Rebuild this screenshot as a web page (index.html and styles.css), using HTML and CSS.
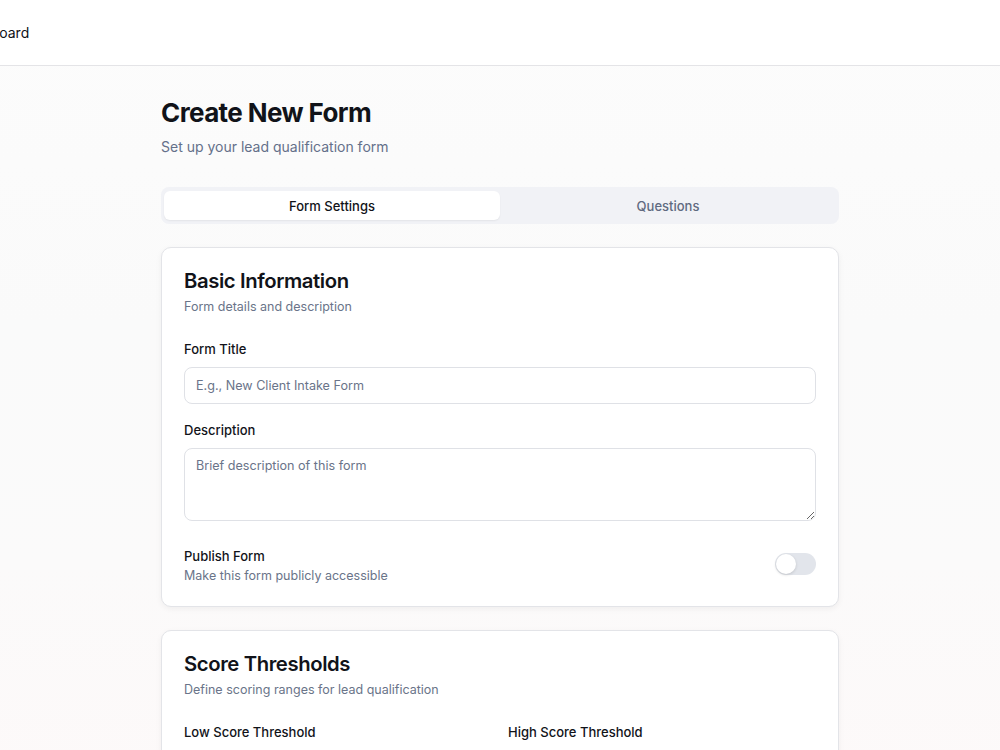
FILE: index.html
```html
<!DOCTYPE html>
<html lang="en">
<head>
<meta charset="utf-8">
<title>Create New Form</title>
<link rel="stylesheet" href="styles.css">
</head>
<body>
<header class="topbar">
  <a class="nav-link" href="#">Dashboard</a>
</header>
<main class="page">
  <div class="container">
    <h1 class="page-title">Create New Form</h1>
    <p class="page-sub">Set up your lead qualification form</p>

    <div class="tabs">
      <button class="tab active">Form Settings</button>
      <button class="tab">Questions</button>
    </div>

    <section class="card">
      <h2 class="card-title">Basic Information</h2>
      <p class="card-sub">Form details and description</p>

      <div class="field">
        <label class="label">Form Title</label>
        <input class="input" type="text" placeholder="E.g., New Client Intake Form">
      </div>

      <div class="field">
        <label class="label">Description</label>
        <textarea class="textarea" placeholder="Brief description of this form"></textarea>
      </div>

      <div class="switch-row">
        <div>
          <div class="label">Publish Form</div>
          <div class="hint">Make this form publicly accessible</div>
        </div>
        <span class="switch"><span class="knob"></span></span>
      </div>
    </section>

    <section class="card">
      <h2 class="card-title">Score Thresholds</h2>
      <p class="card-sub">Define scoring ranges for lead qualification</p>
      <div class="grid2">
        <div class="field">
          <label class="label">Low Score Threshold</label>
          <input class="input" type="number" value="30">
        </div>
        <div class="field">
          <label class="label">High Score Threshold</label>
          <input class="input" type="number" value="70">
        </div>
      </div>
    </section>
  </div>
</main>
</body>
</html>
```

FILE: styles.css
```css
* { box-sizing: border-box; }
html, body { margin: 0; padding: 0; }
body {
  font-family: Inter, "Noto Sans", sans-serif;
  color: #0f1117;
  background: linear-gradient(180deg, #fcfcfc 0%, #fafafa 40%, #fbfafa 70%, #fdf9f9 100%);
  min-height: 100vh;
  overflow: hidden;
}
.topbar {
  height: 66px;
  background: #ffffff;
  border-bottom: 1px solid #e4e4e7;
  display: flex;
  align-items: center;
  overflow: hidden;
}
.nav-link {
  margin-left: -43px;
  font-size: 14px;
  color: #0f1117;
  text-decoration: none;
  line-height: 20px;
}
.page { padding-top: 31px; }
.container {
  width: 678px;
  margin: 0 auto;
}
.page-title {
  margin: 0;
  font-size: 26px;
  line-height: 32px;
  font-weight: 700;
  letter-spacing: -0.6px;
  color: #111319;
}
.page-sub {
  margin: 8px 0 0;
  font-size: 14px;
  line-height: 20px;
  color: #64708a;
}
.tabs {
  margin-top: 30px;
  background: #f1f2f6;
  border-radius: 8px;
  padding: 4px 3px;
  height: 37px;
  display: grid;
  grid-template-columns: 1fr 1fr;
}
.tab {
  border: 0;
  background: transparent;
  font-family: inherit;
  font-size: 13px;
  font-weight: 500;
  color: #5f6a80;
  border-radius: 6px;
  cursor: pointer;
}
.tab.active {
  background: #ffffff;
  color: #111319;
  box-shadow: 0 1px 2px rgba(0,0,0,0.06);
}
.card {
  margin-top: 23px;
  background: #ffffff;
  border: 1px solid #e3e4e8;
  border-radius: 10px;
  box-shadow: 0 2px 6px rgba(0,0,0,0.05);
  padding: 19px 22px 20px;
}
.card-title {
  margin: 0;
  font-size: 20.3px;
  line-height: 28px;
  font-weight: 600;
  letter-spacing: -0.4px;
  color: #111319;
}
.card-sub {
  margin: 2px 0 0;
  font-size: 12.5px;
  line-height: 20px;
  color: #6a7489;
}
.field { margin-top: 22px; display: flex; flex-direction: column; }
.field + .field { margin-top: 16px; }
.label {
  font-size: 13px;
  line-height: 20px;
  font-weight: 500;
  color: #111319;
}
.input, .textarea {
  margin-top: 8px;
  width: 100%;
  border: 1px solid #dfe1e6;
  border-radius: 8px;
  font-family: inherit;
  font-size: 12.6px;
  color: #111319;
  background: #fff;
  padding: 0 11px;
}
.input { height: 37px; }
.textarea {
  height: 73px;
  padding-top: 9px;
  resize: vertical;
}
.input::placeholder, .textarea::placeholder { color: #6a7489; }
.switch-row {
  margin-top: 25px;
  display: flex;
  align-items: center;
  justify-content: space-between;
}
.hint {
  font-size: 12.5px;
  line-height: 20px;
  color: #6a7489;
}
.switch {
  width: 41px;
  height: 22px;
  border-radius: 11px;
  background: #e2e5eb;
  position: relative;
  display: inline-block;
  margin-top: -4px;
}
.knob {
  position: absolute;
  left: 1px;
  top: 1px;
  width: 20px;
  height: 20px;
  border-radius: 50%;
  background: #fff;
  box-shadow: 0 1px 3px rgba(0,0,0,0.15);
}
.grid2 {
  display: grid;
  grid-template-columns: 1fr 1fr;
  column-gap: 16px;
}
.grid2 .field + .field { margin-top: 22px; }
```
